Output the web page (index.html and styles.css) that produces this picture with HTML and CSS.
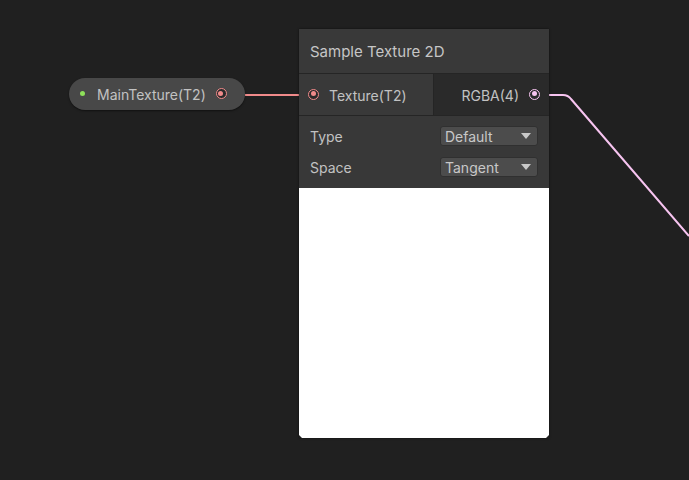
FILE: index.html
```html
<!DOCTYPE html>
<html>
<head>
<meta charset="utf-8">
<link rel="stylesheet" href="styles.css">
</head>
<body>
<div class="canvas">
  <svg class="edges" width="689" height="480" viewBox="0 0 689 480">
    <line x1="245" y1="95" x2="299" y2="95" class="edge-red"/>
    <line x1="299" y1="95" x2="310" y2="95" class="stub-red"/>
    <line x1="538" y1="95" x2="549" y2="95" class="stub-pink"/>
    <path d="M549 95 L563 95 Q568 95 571 99 L689 236" class="edge-pink"/>
  </svg>

  <div class="prop-node">
    <span class="dot-green"></span>
    <span class="prop-label">MainTexture(T2)</span>
    <span class="port port-red"></span>
  </div>

  <div class="node">
    <div class="node-title">Sample Texture 2D</div>
    <div class="node-ports">
      <div class="ports-in">
        <span class="port port-red"></span>
        <span class="port-label">Texture(T2)</span>
      </div>
      <div class="ports-out">
        <span class="port-label">RGBA(4)</span>
        <span class="port port-pink"></span>
      </div>
    </div>
    <div class="node-settings">
      <div class="setting-row">
        <span class="setting-label">Type</span>
        <div class="dropdown"><span>Default</span><span class="caret"></span></div>
      </div>
      <div class="setting-row">
        <span class="setting-label">Space</span>
        <div class="dropdown"><span>Tangent</span><span class="caret"></span></div>
      </div>
    </div>
    <div class="preview"></div>
  </div>
</div>
</body>
</html>
```

FILE: styles.css
```css
* { box-sizing: border-box; }
html, body {
  margin: 0;
  padding: 0;
  background: #202020;
  font-family: Inter, "Noto Sans", sans-serif;
}
.canvas {
  position: relative;
  width: 689px;
  height: 480px;
  overflow: hidden;
  background: #202020;
}
.edges {
  position: absolute;
  left: 0;
  top: 0;
}
.edge-red { stroke: #f08a8a; stroke-width: 2; }
.stub-red { stroke: #6e4848; stroke-width: 2; }
.stub-pink { stroke: #6a5468; stroke-width: 2; }
.edge-pink { stroke: #f7c4f0; stroke-width: 2; fill: none; }

.prop-node {
  position: absolute;
  left: 69px;
  top: 78px;
  width: 176px;
  height: 32px;
  border-radius: 16px;
  background: #484848;
  display: flex;
  align-items: center;
  padding-left: 11px;
  padding-top: 2px;
  box-shadow: 0 1px 2px rgba(0,0,0,0.5);
}
.dot-green {
  width: 5px;
  height: 5px;
  border-radius: 50%;
  background: #8ee05a;
  margin-right: 12px;
  margin-top: -3px;
}
.prop-label {
  color: #c2c2c2;
  font-size: 14px;
  line-height: 16px;
  margin-right: 10px;
}
.port {
  width: 11px;
  height: 11px;
  border-radius: 50%;
  display: inline-block;
  position: relative;
  background: #2a2a2a;
  margin-top: -3px;
}
.port::after {
  content: "";
  position: absolute;
  border-radius: 50%;
}
.port-red { border: 1.5px solid #f08a8a; }
.port-red::after { background: #f08a8a; left: 1.5px; top: 1.5px; width: 5px; height: 5px; }
.port-pink { border: 1.5px solid #f7c4f0; }
.port-pink::after { background: #f7c4f0; left: 1.5px; top: 1.5px; width: 5px; height: 5px; }

.node {
  position: absolute;
  left: 299px;
  top: 29px;
  width: 250px;
  display: flex;
  flex-direction: column;
  box-shadow: 0 0 2px rgba(0,0,0,0.6);
}
.node-title {
  height: 45px;
  background: #393939;
  color: #c6c6c6;
  font-size: 15px;
  display: flex;
  align-items: center;
  padding-left: 11px;
  padding-top: 1px;
  border-bottom: 1px solid #252525;
}
.node-ports {
  height: 42px;
  display: flex;
  border-bottom: 1px solid #252525;
}
.ports-in {
  width: 135px;
  background: #393939;
  display: flex;
  align-items: center;
  padding-left: 9px;
  padding-top: 2px;
  gap: 10px;
  border-right: 1px solid #252525;
}
.ports-out {
  flex: 1;
  background: #2a2a2a;
  display: flex;
  align-items: center;
  justify-content: flex-end;
  padding-right: 9px;
  padding-top: 2px;
  gap: 10px;
}
.port-label {
  color: #c2c2c2;
  font-size: 14px;
  line-height: 16px;
}
.node-settings {
  background: #383838;
  padding: 10px 11px 0 11px;
  display: flex;
  flex-direction: column;
  gap: 11px;
  height: 72px;
}
.setting-row {
  display: flex;
  justify-content: space-between;
  align-items: center;
  height: 20px;
}
.setting-label {
  color: #c2c2c2;
  font-size: 14px;
  line-height: 16px;
  padding-top: 1px;
}
.dropdown {
  width: 98px;
  height: 20px;
  background: #4c4c4c;
  border-radius: 3px;
  border: 1px solid #303030;
  display: flex;
  align-items: center;
  justify-content: space-between;
  padding: 1px 6px 0 4px;
  color: #c8c8c8;
  font-size: 14px;
  line-height: 16px;
}
.caret {
  width: 0;
  height: 0;
  border-left: 5px solid transparent;
  border-right: 5px solid transparent;
  border-top: 6px solid #c8c8c8;
  margin-top: -1px;
}
.preview {
  height: 250px;
  background: #ffffff;
  clip-path: polygon(0 0, 100% 0, 100% calc(100% - 3px), calc(100% - 3px) 100%, 3px 100%, 0 calc(100% - 3px));
}
```
